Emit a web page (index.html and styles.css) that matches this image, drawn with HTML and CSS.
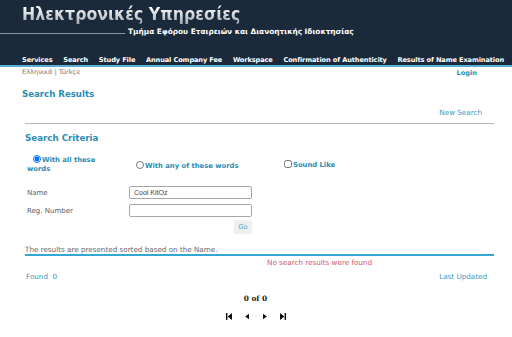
FILE: index.html
```
<!DOCTYPE html>
<html lang="el">
<head>
    <meta charset="UTF-8">
    <meta name="viewport" content="width=device-width, initial-scale=1.0">
    <title>Ηλεκτρονικές Υπηρεσίες</title>
    <link rel="stylesheet" href="styles.css">
</head>
<body>
    <div class="header">
        <div class="brand">Ηλεκτρονικές Υπηρεσίες</div>
        <div class="tagline">
            <span class="rule"></span>
            <span class="dept">Τμήμα Εφόρου Εταιρειών και Διανοητικής Ιδιοκτησίας</span>
        </div>
        <ul class="nav">
            <li>Services</li>
            <li>Search</li>
            <li>Study File</li>
            <li>Annual Company Fee</li>
            <li>Workspace</li>
            <li>Confirmation of Authenticity</li>
            <li>Results of Name Examination</li>
        </ul>
    </div>
    <div class="langbar">
        <span class="langs">Ελληνικά | Türkçe</span>
        <a href="#" class="login">Login</a>
    </div>

    <div class="content">
        <h2 class="page-title">Search Results</h2>
        <div class="new-search"><a href="#">New Search</a></div>
        <hr class="divider">

        <h3 class="section-title">Search Criteria</h3>
        <div class="options">
            <label class="opt opt-all"><input type="radio" name="mode" checked>With all these words</label>
            <label class="opt opt-any"><input type="radio" name="mode">With any of these words</label>
            <label class="opt opt-sound"><input type="checkbox">Sound Like</label>
        </div>

        <div class="field field-first">
            <span class="field-label">Name</span>
            <input type="text" class="field-input" value="Cool KitOz">
        </div>
        <div class="field">
            <span class="field-label">Reg. Number</span>
            <input type="text" class="field-input">
        </div>
        <div class="actions">
            <button class="go">Go</button>
        </div>

        <div class="note">The results are presented sorted based on the Name.</div>
        <div class="empty">No search results were found</div>

        <div class="summary">
            <span>Found&nbsp;&nbsp;0</span>
            <span>Last Updated</span>
        </div>

        <div class="pager">
            <div class="count">0 of 0</div>
            <div class="arrows">
                <svg width="6" height="7" viewBox="0 0 6 7"><rect x="0" y="0" width="1.4" height="7" fill="#111"/><polygon points="6,0 6,7 1.6,3.5" fill="#111"/></svg>
                <svg width="6" height="7" viewBox="0 0 6 7"><polygon points="5,0.8 5,6.2 1.2,3.5" fill="#111"/></svg>
                <svg width="6" height="7" viewBox="0 0 6 7"><polygon points="1,0.8 1,6.2 4.8,3.5" fill="#111"/></svg>
                <svg width="6" height="7" viewBox="0 0 6 7"><polygon points="0,0 0,7 4.4,3.5" fill="#111"/><rect x="4.6" y="0" width="1.4" height="7" fill="#111"/></svg>
            </div>
        </div>
    </div>
</body>
</html>
```

FILE: styles.css
```
body {
    margin: 0;
    background: #fff;
    font-family: "DejaVu Sans", Verdana, sans-serif;
    font-size: 7.2px;
    color: #555;
}
a {
    text-decoration: none;
}
.header {
    background-color: #1b2a3a;
    height: 67px;
    border-bottom: 2px solid #5aaed4;
    display: flex;
    flex-direction: column;
    box-sizing: border-box;
}
.brand {
    padding: 2px 0 0 22px;
    font-family: "DejaVu Sans Condensed", "DejaVu Sans", sans-serif;
    font-weight: bold;
    font-size: 17.5px;
    line-height: 24px;
    background: linear-gradient(to bottom, #ffffff 25%, #95a0ab 100%);
    -webkit-background-clip: text;
    background-clip: text;
    color: transparent;
    width: max-content;
}
.tagline {
    display: flex;
    align-items: flex-end;
    gap: 3px;
    margin-top: 1px;
}
.tagline .rule {
    width: 125px;
    border-top: 1px solid #8d97a2;
    margin-bottom: 2px;
}
.dept {
    color: #fff;
    font-weight: bold;
    font-size: 7.4px;
    line-height: 9px;
}
.nav {
    list-style: none;
    margin: auto 0 0;
    padding: 0 0 1px 22px;
    display: flex;
    gap: 10.7px;
}
.nav li {
    color: #fff;
    font-weight: bold;
    font-size: 6.6px;
    line-height: 8px;
    letter-spacing: -0.1px;
}
.langbar {
    display: flex;
    justify-content: space-between;
    padding: 1px 35px 0 22px;
    line-height: 9px;
    font-size: 6.6px;
}
.langs {
    color: #777;
}
.login {
    color: #2a8db4;
    font-weight: bold;
    margin-top: 1px;
}
.content {
    padding: 0 18px 0 21px;
}
.page-title {
    margin: 11px 0 0 1px;
    font-size: 8.6px;
    line-height: 11px;
    color: #2a8db4;
}
.new-search {
    text-align: right;
    padding-right: 12px;
    margin-top: 8px;
    line-height: 9px;
}
.new-search a {
    color: #3c98bd;
}
.divider {
    border: 0;
    border-top: 1px solid #b8b8b8;
    margin: 6px 0 0 4px;
}
.section-title {
    margin: 8px 0 0 4px;
    font-size: 8.7px;
    line-height: 12px;
    color: #2a8db4;
}
.options {
    display: grid;
    grid-template-columns: 109px 148px auto;
    margin: 11px 0 0 6px;
    align-items: center;
}
.opt {
    color: #2a8db4;
    font-weight: bold;
    font-size: 6.8px;
    line-height: 9px;
}
.opt input {
    width: 8px;
    height: 8px;
    margin: 0 1px 0 0;
    vertical-align: -1px;
}
.opt-all {
    display: block;
    width: 70px;
    text-indent: 6px;
}
.opt-any {
    margin-top: 2px;
}
.field {
    display: flex;
    align-items: center;
    margin: 5px 0 0 6px;
}
.field-first {
    margin-top: 12px;
}
.field-label {
    width: 102px;
    font-size: 7px;
    color: #5c5c5c;
}
.field-input {
    width: 123px;
    height: 13px;
    box-sizing: border-box;
    border: 1px solid #a7a7a7;
    border-radius: 2px;
    padding: 0 4px;
    font-family: "Liberation Sans", Arial, sans-serif;
    font-size: 7px;
    color: #444;
}
.actions {
    display: flex;
    justify-content: flex-end;
    width: 231px;
    margin-top: 3px;
}
.go {
    background: #eef0f0;
    border: 0;
    color: #4a9fc2;
    font-family: "DejaVu Sans", sans-serif;
    font-size: 6.8px;
    width: 18px;
    height: 14px;
    padding: 0;
}
.note {
    margin: 12px 0 0 4px;
    border-bottom: 2px solid #33a8d2;
    line-height: 8px;
    color: #666;
}
.empty {
    color: #d0566a;
    padding-left: 246px;
    margin-top: 2px;
    line-height: 9px;
}
.summary {
    display: flex;
    justify-content: space-between;
    padding: 0 7px 0 5px;
    margin-top: 5px;
    line-height: 9px;
    color: #3c98bd;
}
.pager {
    text-align: center;
    margin: 13px 0 0 -4px;
}
.count {
    font-family: "DejaVu Serif", serif;
    font-weight: bold;
    font-size: 7.4px;
    color: #222;
    line-height: 10px;
}
.arrows {
    display: flex;
    justify-content: center;
    gap: 12px;
    margin-top: 9px;
}
```
